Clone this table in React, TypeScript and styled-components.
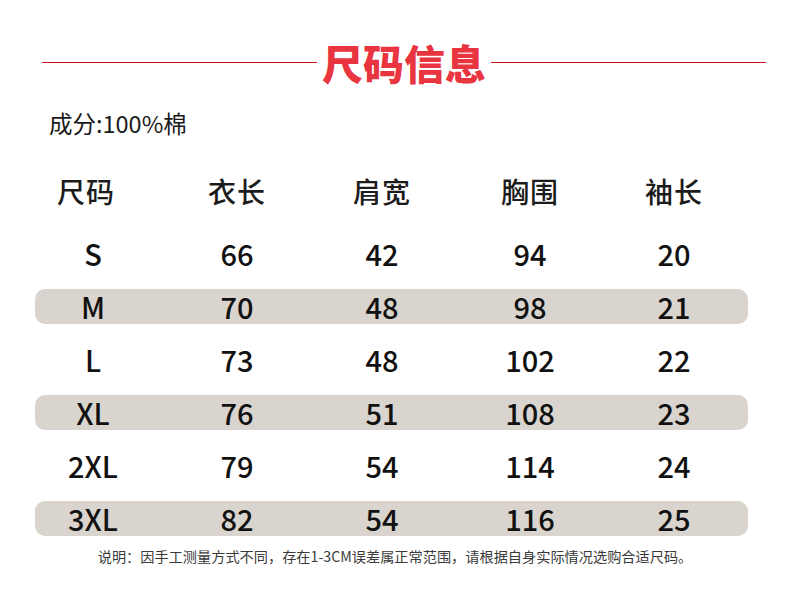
import React from "react";
import styled, { createGlobalStyle } from "styled-components";

const Global = createGlobalStyle`
  html, body { margin: 0; padding: 0; background: #ffffff; }
  body { font-family: "Noto Sans CJK SC", "Noto Sans", sans-serif; color: #1a1a1a; }
`;

const Page = styled.div`
  width: 790px;
  height: 606px;
  background: #fff;
  display: flex;
  flex-direction: column;
  overflow: hidden;
`;

const TitleBar = styled.div`
  display: flex;
  align-items: center;
  gap: 5px;
  padding: 38px 24px 0 42px;
  height: 48px;
`;

const Rule = styled.div`
  flex: 1;
  height: 1px;
  background: #c4111c;
`;

const Title = styled.h1`
  margin: 0;
  font-family: "Noto Sans CJK SC", sans-serif;
  font-weight: 900;
  font-size: 41px;
  line-height: 48px;
  letter-spacing: 0px;
  color: #e8353f;
`;

const Material = styled.div`
  margin: 22px 0 0 49px;
  font-size: 23.5px;
  line-height: 30px;
  color: #1a1a1a;
`;

const Table = styled.div`
  margin: 33px 0 0 35px;
  width: 713px;
  display: flex;
  flex-direction: column;
  gap: 18px;
`;

const Row = styled.div<{ $shaded?: boolean; $header?: boolean }>`
  display: grid;
  grid-template-columns: 116px 172px 118px 178px 110px;
  height: ${(p) => (p.$header ? "40px" : "35px")};
  margin-bottom: ${(p) => (p.$header ? "6.5px" : "0")};
  align-items: center;
  border-radius: 10px;
  background: ${(p) => (p.$shaded ? "#d9d5ce" : "transparent")};
`;

const HeadCell = styled.div<{ $shift?: number }>`
  text-align: center;
  font-size: 28px;
  font-weight: 500;
  line-height: 40px;
  color: #1c1c1c;
  letter-spacing: 1px;
  padding-right: ${(p) => (p.$shift ? p.$shift * 2 : 0)}px;
`;

const Cell = styled.div`
  text-align: center;
  font-size: 29px;
  font-weight: 500;
  line-height: 35px;
  color: #111;
`;

const Note = styled.div`
  margin: 10px 0 0 0;
  text-align: center;
  padding-right: 0;
  font-size: 14.2px;
  line-height: 20px;
  color: #3a3a3a;
`;

const headers = ["尺码", "衣长", "肩宽", "胸围", "袖长"];
const rows: string[][] = [
  ["S", "66", "42", "94", "20"],
  ["M", "70", "48", "98", "21"],
  ["L", "73", "48", "102", "22"],
  ["XL", "76", "51", "108", "23"],
  ["2XL", "79", "54", "114", "24"],
  ["3XL", "82", "54", "116", "25"],
];

export default function App() {
  return (
    <Page>
      <Global />
      <TitleBar>
        <Rule />
        <Title>尺码信息</Title>
        <Rule />
      </TitleBar>
      <Material>成分:100%棉</Material>
      <Table>
        <Row $header>
          {headers.map((h, i) => (
            <HeadCell key={h} $shift={i === 0 ? 7 : i === 4 ? -1 : 0}>
              {h}
            </HeadCell>
          ))}
        </Row>
        {rows.map((r, i) => (
          <Row key={r[0]} $shaded={i % 2 === 1}>
            {r.map((v, j) => (
              <Cell key={j}>{v}</Cell>
            ))}
          </Row>
        ))}
      </Table>
      <Note>说明：因手工测量方式不同，存在1-3CM误差属正常范围，请根据自身实际情况选购合适尺码。</Note>
    </Page>
  );
}
